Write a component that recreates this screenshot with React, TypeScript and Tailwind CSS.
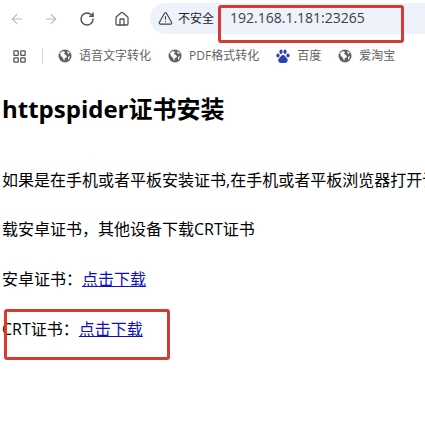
import { ArrowLeft, ArrowRight, RotateCw, House, TriangleAlert, LayoutGrid } from "lucide-react";

const FONT = "font-['Open_Sans','Noto_Sans_CJK_SC',sans-serif]";

function Globe() {
  return (
    <svg width="14" height="14" viewBox="0 0 14 14" className="shrink-0">
      <circle cx="7" cy="7" r="6.5" fill="#5f6368" />
      <path d="M2 4l3-2 2 1-1 2 2 1 1 2-2 1-1 3-1-3-2-2zM9 2l3 2-2 1zM10 8l2-1-1 3-1 1z" fill="#fff" />
    </svg>
  );
}

function Paw() {
  return (
    <svg width="14" height="15" viewBox="0 0 14 15" className="shrink-0">
      <g fill="#2f3fae">
        <ellipse cx="2" cy="6.5" rx="1.6" ry="2.1" />
        <ellipse cx="5" cy="2.8" rx="1.6" ry="2.2" />
        <ellipse cx="9" cy="2.8" rx="1.6" ry="2.2" />
        <ellipse cx="12" cy="6.5" rx="1.6" ry="2.1" />
        <path d="M7 6c2 0 2.500 2 4 3.500s.5 4.500-2 4.500H5c-2.500 0-3.500-3-2-4.500S5 6 7 6z" />
      </g>
    </svg>
  );
}

function Bookmark({ label, icon }: { label: string; icon?: React.ReactNode }) {
  return (
    <div className="flex items-center gap-[7px]">
      {icon ?? <Globe />}
      <span className="text-[12px] leading-[16px] text-[#5f6368] whitespace-nowrap">{label}</span>
    </div>
  );
}

export default function App() {
  return (
    <div className={`relative h-[430px] w-[425px] overflow-hidden bg-white text-black ${FONT}`}>
      {/* browser toolbar */}
      <div className="flex h-[37px] items-center">
        <ArrowLeft size={16} strokeWidth={1.6} className="ml-[9px] text-[#b5b8bc]" />
        <ArrowRight size={16} strokeWidth={1.6} className="ml-[18px] text-[#b5b8bc]" />
        <RotateCw size={16} strokeWidth={2.2} className="ml-[20px] text-[#4d5156]" />
        <House size={16} strokeWidth={1.9} className="ml-[19px] text-[#4d5156]" />
        <div className="ml-[20px] flex h-[31px] flex-1 items-center rounded-l-full bg-[#eef2fa] pl-[8px]">
          <TriangleAlert size={15} strokeWidth={1.8} className="text-[#3c4043]" />
          <span className="ml-[5px] text-[12px] leading-[16px] text-[#202124]">不安全</span>
          <span className="ml-[16px] -mt-[1px] text-[14px] leading-[20px] text-[#3c4043]">192.168.1.181:23265</span>
        </div>
      </div>
      {/* bookmarks bar */}
      <div className="flex h-[38px] items-center pl-[12px]">
        <LayoutGrid size={15} strokeWidth={2} className="text-[#4d5156]" />
        <div className="ml-[15px] h-[16px] w-[1px] bg-[#d5dbe3]" />
        <div className="ml-[15px] flex items-center gap-[17px]">
          <Bookmark label="语音文字转化" />
          <Bookmark label="PDF格式转化" />
          <Bookmark label="百度" icon={<Paw />} />
          <Bookmark label="爱淘宝" />
        </div>
      </div>
      {/* page */}
      <div className="pl-[2px]">
        <h1 className="mt-[20px] text-[24px] font-bold leading-[28px] whitespace-nowrap">httpspider证书安装</h1>
        <p className="mt-[45px] text-[16px] leading-[24px] whitespace-nowrap">
          如果是在手机或者平板安装证书,在手机或者平板浏览器打开该
        </p>
        <p className="mt-[25px] text-[16px] leading-[24px]">载安卓证书，其他设备下载CRT证书</p>
        <p className="mt-[26px] text-[16px] leading-[24px]">
          安卓证书：<a href="#" className="text-[#1010c0] underline">点击下载</a>
        </p>
        <p className="mt-[26px] text-[16px] leading-[24px]">
          CRT证书：<a href="#" className="text-[#1010c0] underline">点击下载</a>
        </p>
      </div>
      {/* red annotation boxes */}
      <div className="absolute left-[218px] top-[5px] h-[38px] w-[186px] rounded-[3px] border-[3px] border-[#d63a33]" />
      <div className="absolute left-[4px] top-[309px] h-[51px] w-[166px] rounded-[3px] border-[3px] border-[#d63a33]" />
    </div>
  );
}
